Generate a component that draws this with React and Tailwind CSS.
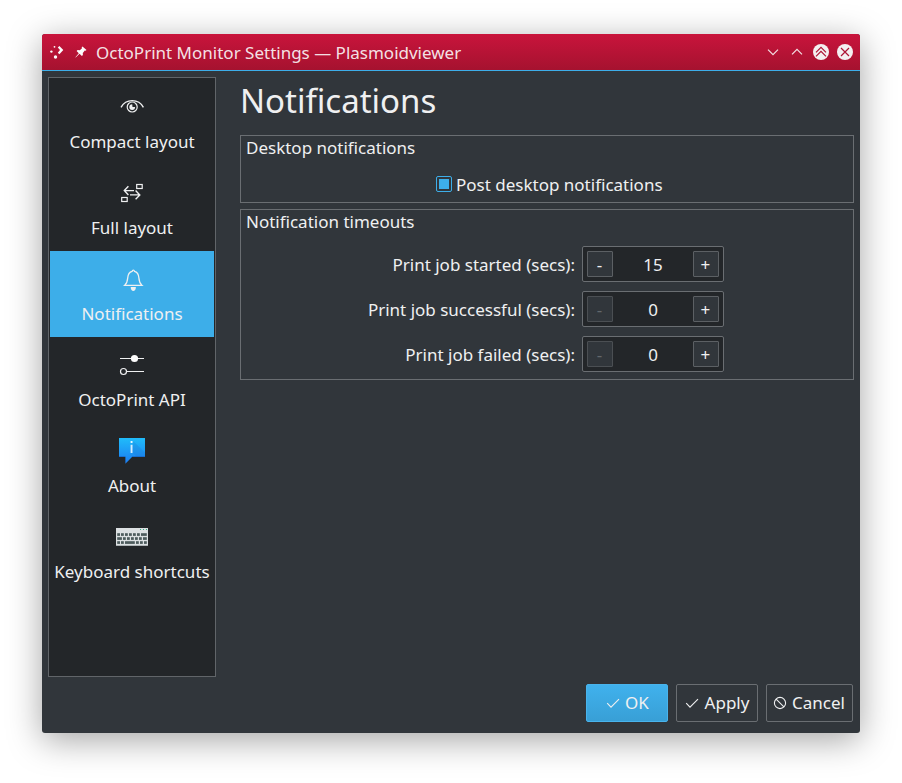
import React from "react";

function EyeIcon() {
  return (
    <svg width="32" height="32" viewBox="0 0 32 32" fill="none" stroke="#eff0f1">
      <path d="M5 16.3C7.5 11.8 11.5 9.6 16.2 9.6S25 11.8 27.4 16.3" strokeWidth="1.4" />
      <circle cx="16.2" cy="16" r="5" strokeWidth="1.2" />
      <path d="M16.2 13.2a2.900 2.900 0 1 0 2.900 2.900h-2.600z" fill="#eff0f1" stroke="none" />
    </svg>
  );
}

function LayoutIcon() {
  return (
    <svg width="32" height="32" viewBox="0 0 32 32" fill="none" stroke="#eff0f1" strokeWidth="1.2">
      <rect x="20.7" y="7.500" width="5.500" height="4" />
      <rect x="5.700" y="20.500" width="5.500" height="4" />
      <path d="M12.400 9.300L8.300 13.600l4.100 4.300M8.300 13.600H18M19.600 13.600l4.200 4.300-4.200 4.300M23.600 17.900H14" strokeWidth="1.400" />
    </svg>
  );
}

function BellIcon() {
  return (
    <svg width="32" height="32" viewBox="0 0 32 32" fill="none" stroke="#eff0f1" strokeWidth="1.300">
      <path d="M8.600 22.400h17.400c-2.200-2-2.900-4-3.100-7.400-.3-4-2-6-4.400-6.600-.2-.9-.6-1.200-1.200-1.200s-1 .3-1.200 1.200c-2.400.6-4.100 2.600-4.400 6.600-.2 3.400-.9 5.400-3.100 7.400z" />
      <path d="M14.700 24h5.200c0 2.600-1.200 3.900-2.600 3.900S14.700 26.600 14.700 24z" fill="#eff0f1" stroke="none" />
    </svg>
  );
}

function SlidersIcon() {
  return (
    <svg width="32" height="32" viewBox="0 0 32 32" fill="none" stroke="#eff0f1">
      <path d="M4 9.500H28M10.500 22.500H28" />
      <circle cx="18.500" cy="9.500" r="3.600" fill="#fcfcfc" stroke="none" />
      <circle cx="7.500" cy="22.500" r="3" strokeWidth="1.200" />
    </svg>
  );
}

function AboutIcon() {
  return (
    <svg width="32" height="32" viewBox="0 0 32 32">
      <defs>
        <linearGradient id="bubble" x1="0" y1="0" x2="0" y2="1">
          <stop offset="0" stopColor="#20bcfa" />
          <stop offset="1" stopColor="#1b7cf2" />
        </linearGradient>
      </defs>
      <path d="M3 3H29V22H16L9.400 28.700V22H3z" fill="url(#bubble)" />
      <path d="M17.500 6.500L29 17.500V21.500H20.500L15.500 17z" fill="#1668c8" opacity="0.2" />
      <path d="M3 21.500H9.500M16 21.500H29" stroke="#1765c4" opacity="0.7" />
      <rect x="14.600" y="6" width="1.900" height="2" fill="#e8f5ff" />
      <rect x="14.600" y="9.800" width="1.900" height="8.200" fill="#d3ecff" />
    </svg>
  );
}

const keyRows = [
  { y: 12.2, keys: [[1.2, 2.8], [5, 2.8], [9, 2.8], [13, 2.8], [17, 2.8], [21, 2.8], [25, 5.8]] },
  { y: 16.2, keys: [[1.2, 4.7], [7, 2.8], [11, 2.8], [15, 2.8], [19, 2.8], [23, 2.8], [27, 3.8]] },
  { y: 20.2, keys: [[1.2, 2.8], [5, 2.8], [9, 9.8], [20, 2.8], [24, 2.8], [28, 2.8]] },
];

function KeyboardIcon() {
  return (
    <svg width="32" height="32" viewBox="0 0 32 32">
      <rect y="7" width="32" height="18" fill="#dce0e2" />
      <rect y="24" width="32" height="1" fill="#aeb4b6" />
      {keyRows.map((row) =>
        row.keys.map(([x, w]) => (
          <rect key={`${row.y}-${x}`} x={x} y={row.y} width={w} height="2.700" fill="#4d5b5c" />
        ))
      )}
      <path d="M24 8.500h1M27 8.500h1M30 8.500h1" stroke="#3aa988" />
    </svg>
  );
}

const pages = [
  { label: "Compact layout", Icon: EyeIcon },
  { label: "Full layout", Icon: LayoutIcon },
  { label: "Notifications", Icon: BellIcon, active: true },
  { label: "OctoPrint API", Icon: SlidersIcon },
  { label: "About", Icon: AboutIcon },
  { label: "Keyboard shortcuts", Icon: KeyboardIcon },
];

function TitleBar() {
  return (
    <header className="flex h-[37px] items-center rounded-t-[3px] border-b border-[#3daee9] bg-linear-to-b from-[#c9143c] to-[#a5122f] pl-2 pr-[7px]">
      <svg width="14" height="16" viewBox="0 0 14 16" fill="#fcfcfc">
        <circle cx="4.500" cy="2.800" r="0.900" />
        <circle cx="1.400" cy="7.600" r="1.200" />
        <circle cx="5.500" cy="13" r="1.700" />
        <path d="M7.800 3.400l1.600-1.500 3.900 4.200-3.900 4.200-1.600-1.500 2.200-2.700z" />
      </svg>
      <svg className="ml-[11px]" width="12" height="12" viewBox="0 0 12 12" fill="#fcfcfc">
        <path d="M7.500.5l4 3.500-1 .8-.7-.2-2 2.400.1 2.100-1 .9L4.500 7.800.7 11.500l-.3-.3L3.800 7.200 1.600 5l1-.9 2.200.1 2.200-2-.3-.9z" />
      </svg>
      <h1 className="ml-[9px] text-[17px] leading-none text-[#fcfcfc]/90">OctoPrint Monitor Settings — Plasmoidviewer</h1>
      <div className="ml-auto flex items-center gap-2">
        <svg width="16" height="16" viewBox="0 0 16 16" fill="none" stroke="#f3dfe3" strokeWidth="1.200">
          <path d="M3 5.700l5 5 5-5" />
        </svg>
        <svg width="16" height="16" viewBox="0 0 16 16" fill="none" stroke="#f3dfe3" strokeWidth="1.200">
          <path d="M3 10.300l5-5 5 5" />
        </svg>
        <svg width="16" height="16" viewBox="0 0 16 16" fill="none" stroke="#ad1435" strokeWidth="1.200">
          <circle cx="8" cy="8" r="8" fill="#f4f0f1" stroke="none" />
          <path d="M3 8.300l5-5 5 5M3 12.300l5-5 5 5" />
        </svg>
        <svg width="16" height="16" viewBox="0 0 16 16" fill="none" stroke="#ad1435" strokeWidth="1.200">
          <circle cx="8" cy="8" r="8" fill="#f4f0f1" stroke="none" />
          <path d="M4 4l8 8M12 4l-8 8" />
        </svg>
      </div>
    </header>
  );
}

function Sidebar() {
  return (
    <nav className="h-[600px] w-[168px] shrink-0 border border-[#616569] bg-[#232629] p-px">
      {pages.map(({ label, Icon, active }) => (
        <div key={label} className={`flex h-[86px] flex-col items-center pt-3 ${active ? "bg-[#3daee9]" : ""}`}>
          <Icon />
          <span className="mt-[7px] whitespace-nowrap text-[17px] leading-6">{label}</span>
        </div>
      ))}
    </nav>
  );
}

function StepButton({ children, disabled }) {
  return (
    <button className={`flex size-[26px] items-center justify-center rounded-[1px] border bg-[#31363b] pr-px pt-px text-[17px] leading-none ${disabled ? "border-[#4b4f53] text-[#63686c]" : "border-[#5c6064]"}`}>
      {children}
    </button>
  );
}

function SpinBox({ label, value }) {
  return (
    <div className="flex h-9 items-center">
      <span className="w-[334px] pt-0.5 text-right text-[17px] leading-6">{label}</span>
      <div className="ml-[7px] flex h-9 w-[142px] items-center justify-between rounded-xs border border-[#6a6e72] bg-[#232629] px-1">
        <StepButton disabled={value === 0}>-</StepButton>
        <span className="text-[17px] leading-none">{value}</span>
        <StepButton>+</StepButton>
      </div>
    </div>
  );
}

function CheckIcon() {
  return (
    <svg width="14" height="14" viewBox="0 0 14 14" fill="none" stroke="#eff0f1" strokeWidth="1.100">
      <path d="M1.200 7.200l3.800 3.900 8-8" />
    </svg>
  );
}

function CancelIcon() {
  return (
    <svg width="14" height="14" viewBox="0 0 14 14" fill="none" stroke="#eff0f1" strokeWidth="1.100">
      <circle cx="7" cy="7" r="5.600" />
      <path d="M3.100 3.100l7.800 7.800" />
    </svg>
  );
}

export default function App() {
  return (
    <div className="h-[783px] w-[902px] overflow-hidden bg-white px-[42px] pt-[34px] font-['Noto_Sans',sans-serif] text-[#eff0f1]">
      <div className="flex h-[699px] w-[818px] flex-col rounded-[3px] bg-[#31363b] shadow-[0_7px_34px_rgba(0,0,0,0.36)]">
        <TitleBar />
        <div className="flex px-1.5 pt-1.5">
          <Sidebar />
          <main className="ml-6 w-[614px]">
            <h2 className="mt-1 text-[33px] leading-10">Notifications</h2>
            <section className="mt-[14px] h-[68px] border border-[#6a6e72] px-[5px]">
              <h3 className="text-[17px] leading-6">Desktop notifications</h3>
              <label className="mt-[13px] flex items-center pl-[190px] text-[17px] leading-6">
                <span className="mb-0.5 flex size-4 items-center justify-center rounded-xs border border-[#3daee9]">
                  <span className="size-2.5 bg-[#3daee9]" />
                </span>
                <span className="ml-1">Post desktop notifications</span>
              </label>
            </section>
            <section className="mt-1.5 h-[171px] border border-[#6a6e72]">
              <h3 className="pl-[5px] text-[17px] leading-6">Notification timeouts</h3>
              <div className="mt-3 flex flex-col gap-[9px]">
                <SpinBox label="Print job started (secs):" value={15} />
                <SpinBox label="Print job successful (secs):" value={0} />
                <SpinBox label="Print job failed (secs):" value={0} />
              </div>
            </section>
          </main>
        </div>
        <footer className="mt-[7px] flex justify-end gap-2 pr-[7px] text-[17px] leading-6">
          <button className="flex h-[38px] w-[82px] items-center justify-center gap-[5px] rounded-xs border border-[#49b4ec] bg-linear-to-b from-[#40b1ed] to-[#389fd6] pl-px">
            <CheckIcon />
            OK
          </button>
          <button className="flex h-[38px] w-[82px] items-center justify-center gap-1.5 rounded-xs border border-[#6a6e72]">
            <CheckIcon />
            Apply
          </button>
          <button className="flex h-[38px] w-[87px] items-center justify-center gap-[5px] rounded-xs border border-[#6a6e72] pr-px">
            <CancelIcon />
            Cancel
          </button>
        </footer>
      </div>
    </div>
  );
}
